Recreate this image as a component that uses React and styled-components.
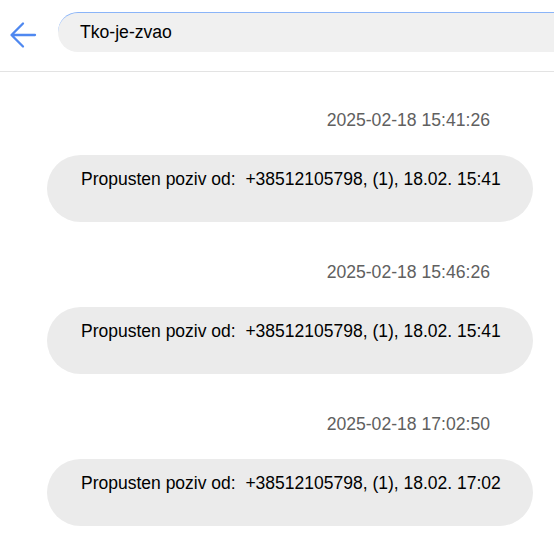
import styled, { createGlobalStyle } from "styled-components";

const GlobalStyle = createGlobalStyle`
  html, body {
    margin: 0;
    padding: 0;
    background: #ffffff;
    font-family: "Liberation Sans", Arial, sans-serif;
  }
`;

const messages = [
  { time: "2025-02-18 15:41:26", text: "Propusten poziv od:  +38512105798, (1), 18.02. 15:41" },
  { time: "2025-02-18 15:46:26", text: "Propusten poziv od:  +38512105798, (1), 18.02. 15:41" },
  { time: "2025-02-18 17:02:50", text: "Propusten poziv od:  +38512105798, (1), 18.02. 17:02" },
];

function BackIcon() {
  return (
    <svg width="28" height="28" viewBox="0 0 28 28" fill="none">
      <path
        d="M26 14H3M14 2.5L2.5 14L14 25.5"
        stroke="#4f88f0"
        strokeWidth="2.3"
        strokeLinecap="round"
        strokeLinejoin="round"
      />
    </svg>
  );
}

export default function App() {
  return (
    <>
      <GlobalStyle />
      <Page>
        <Header>
          <BackButton>
            <BackIcon />
          </BackButton>
          <Search>Tko-je-zvao</Search>
        </Header>

        <List>
          {messages.map((m, i) => (
            <Item key={i}>
              <Time>{m.time}</Time>
              <Bubble>
                <BubbleText>{m.text}</BubbleText>
              </Bubble>
            </Item>
          ))}
        </List>
      </Page>
    </>
  );
}

const Page = styled.div`
  width: 100%;
  overflow: hidden;
`;

const Header = styled.div`
  display: flex;
  align-items: flex-start;
  height: 72px;
  padding-top: 12px;
  box-sizing: border-box;
  border-bottom: 1px solid #e3e3e3;
  overflow: hidden;
`;

const BackButton = styled.div`
  width: 58px;
  display: flex;
  justify-content: flex-start;
  padding: 9px 0 0 9px;
  box-sizing: border-box;
`;

const Search = styled.div`
  flex: 1;
  margin-right: -40px;
  height: 40px;
  display: flex;
  align-items: center;
  padding-left: 22px;
  border-radius: 20px 0 0 20px;
  background: #f0f0f0;
  border-top: 1px solid #8ab4f8;
  box-sizing: border-box;
  font-size: 17.6px;
  color: #000;
`;

const List = styled.div`
  display: flex;
  flex-direction: column;
  gap: 40px;
  padding: 38px 0 12px;
`;

const Item = styled.div`
  display: flex;
  flex-direction: column;
`;

const Time = styled.div`
  text-align: right;
  padding-right: 64px;
  font-size: 17.6px;
  line-height: 20px;
  color: #606060;
`;

const Bubble = styled.div`
  margin: 25px 21px 0 47px;
  height: 67px;
  border-radius: 34px;
  background: #ebebeb;
  box-sizing: border-box;
  padding: 14px 0 0 34px;
`;

const BubbleText = styled.div`
  white-space: pre;
  font-size: 17.5px;
  line-height: 20px;
  color: #000;
`;
